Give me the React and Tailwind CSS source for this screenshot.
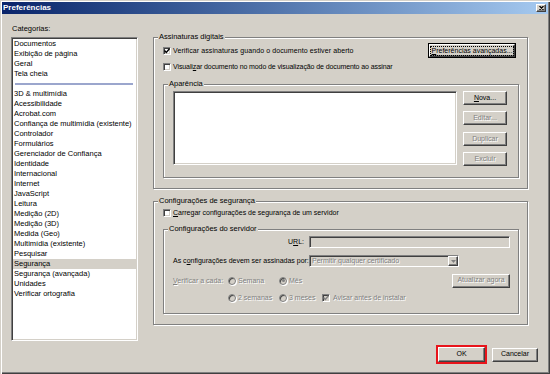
import React from 'react';

const DIS = 'text-[#808080] [text-shadow:1px_1px_0_#fff]';
const RAISED = 'border border-t-white border-l-white border-r-[#404040] border-b-[#404040] shadow-[inset_-1px_-1px_0_#808080] bg-[#d4d0c8]';
const SUNKEN = 'border border-t-[#808080] border-l-[#808080] border-r-white border-b-white shadow-[inset_1px_1px_0_#404040,inset_-1px_-1px_0_#d4d0c8]';

const CATS_TOP = ['Documentos', 'Exibição de página', 'Geral', 'Tela cheia'];
const CATS = [
  '3D & multimídia', 'Acessibilidade', 'Acrobat.com', 'Confiança de multimídia (existente)',
  'Controlador', 'Formulários', 'Gerenciador de Confiança', 'Identidade', 'Internacional',
  'Internet', 'JavaScript', 'Leitura', 'Medição (2D)', 'Medição (3D)', 'Medida (Geo)',
  'Multimídia (existente)', 'Pesquisar', 'Segurança', 'Segurança (avançada)', 'Unidades',
  'Verificar ortografia',
];

const Check = ({ checked, disabled }) => (
  <span className={`w-[8px] h-[8px] shrink-0 flex items-center justify-center ${SUNKEN} ${disabled ? 'bg-[#d4d0c8]' : 'bg-white'}`}>
    {checked && (
      <svg width="6" height="6" viewBox="0 0 6 6">
        <path d="M0.5 2.5 L2.3 4.5 L5.5 0.8" fill="none" stroke={disabled ? '#808080' : '#000'} strokeWidth="1.4" />
      </svg>
    )}
  </span>
);

const Radio = ({ checked }) => (
  <span className="w-[8px] h-[8px] shrink-0 rounded-full border border-[#808080] bg-[#d4d0c8] shadow-[1px_1px_0_#fff,inset_1px_1px_0_#404040] flex items-center justify-center">
    {checked && <span className="w-[3px] h-[3px] rounded-full bg-[#808080]" />}
  </span>
);

const Btn = ({ children, className = '', disabled }) => (
  <div className={`flex items-center justify-center ${RAISED} ${disabled ? DIS : 'text-black'} ${className}`}>
    {children}
  </div>
);

const Group = ({ label, className = '', children }) => (
  <div className={`relative border border-[#808080] shadow-[inset_1px_1px_0_#fff,1px_1px_0_#fff] ${className}`}>
    <span className="absolute top-[-6px] left-[4px] px-[1px] bg-[#d4d0c8] leading-[10px] text-[7.5px]">{label}</span>
    {children}
  </div>
);

export default function App() {
  return (
    <div className="w-[550px] h-[374px] bg-[#d4d0c8] flex flex-col overflow-hidden whitespace-nowrap text-[7px] text-black font-['Liberation_Sans',Arial,sans-serif] shadow-[inset_1px_1px_0_#d4d0c8,inset_2px_2px_0_#fff,inset_-1px_-1px_0_#404040,inset_-2px_-2px_0_#808080]">
      {/* title bar */}
      <div className="mx-[2px] mt-[2px] h-[12px] shrink-0 flex items-center justify-between bg-gradient-to-r from-[#0a246a] to-[#a6caf0]">
        <span className="pl-[1px] text-white font-bold text-[8px] leading-[12px]">Preferências</span>
        <div className={`w-[10px] h-[8px] mr-[2px] flex items-center justify-center ${RAISED}`}>
          <svg width="5" height="4" viewBox="0 0 5 4">
            <path d="M0.5 0 L4.5 4 M4.5 0 L0.5 4" stroke="#000" strokeWidth="1.2" />
          </svg>
        </div>
      </div>

      {/* body */}
      <div className="flex pt-[10px]">
        <div className="ml-[11px] w-[127px] flex flex-col text-[7.5px]">
          <div className="h-[10px] leading-[10px] pl-[1px]">Categorias:</div>
          <div className={`mt-[3px] h-[304px] bg-white ${SUNKEN} p-[1px]`}>
            {CATS_TOP.map(c => (
              <div key={c} className="h-[10px] leading-[10px] pl-[1px]">{c}</div>
            ))}
            <div className="h-[10px] flex items-center pl-[2px] pr-[3px]">
              <div className="h-[2px] w-full bg-[#9ba6cd]" />
            </div>
            {CATS.map(c => (
              <div key={c} className={`h-[10px] leading-[10px] pl-[1px] ${c === 'Segurança' ? 'bg-[#d4d0c8]' : ''}`}>{c}</div>
            ))}
          </div>
        </div>

        <div className="ml-[15px] mt-[13px] flex flex-col">
          <Group label="Assinaturas digitais" className="w-[375px] h-[152px] pl-[9px] pr-[11px] pt-[5px]">
            <div className="h-[15px] flex items-center justify-between">
              <div className="flex items-center gap-[2px]">
                <Check checked />
                <span className="leading-[10px] tracking-[0.1px]">Verificar assinaturas guando o documento estiver aberto</span>
              </div>
              <div className="w-[88px] h-[15px] border border-black">
                <Btn className="w-full h-full">
                  <span className="border border-dotted border-black px-[1px] leading-[8px]"><u>P</u>referências avançadas...</span>
                </Btn>
              </div>
            </div>
            <div className="mt-[4px] h-[10px] flex items-center gap-[2px]">
              <Check />
              <span className="leading-[10px] tracking-[-0.1px]">Visuali<u>z</u>ar documento no modo de visualização de documento ao assinar</span>
            </div>
            <Group label="Aparência" className="mt-[12px] w-[356px] h-[94px] pl-[9px] pt-[6px] flex items-start">
              <div className={`w-[284px] h-[74px] bg-white ${SUNKEN}`} />
              <div className="ml-[6px] flex flex-col">
                <Btn className="w-[44px] h-[14px]"><span><u>N</u>ova...</span></Btn>
                <Btn disabled className="w-[44px] h-[14px] mt-[6px]">Editar...</Btn>
                <Btn disabled className="w-[44px] h-[14px] mt-[7px]">Duplicar</Btn>
                <Btn disabled className="w-[44px] h-[14px] mt-[6px]">Excluir</Btn>
              </div>
            </Group>
          </Group>

          <Group label="Configurações de segurança" className="mt-[12px] w-[375px] h-[124px] pl-[9px] pt-[6px]">
            <div className="h-[10px] flex items-center gap-[2px]">
              <Check />
              <span className="leading-[10px]"><u>C</u>arregar configurações de segurança de um servidor</span>
            </div>
            <Group label="Configurações do servidor" className="mt-[11px] w-[356px] h-[85px] pl-[9px]">
              <div className="mt-[6px] flex items-center">
                <span className="w-[131px] text-right leading-[10px]">U<u>R</u>L:</span>
                <div className={`ml-[5px] w-[201px] h-[12px] bg-[#d4d0c8] ${SUNKEN}`} />
              </div>
              <div className="mt-[7px] flex items-center">
                <span className="w-[131px] text-right leading-[10px]">As c<u>o</u>nfigurações devem ser assinadas por:</span>
                <div className={`ml-[5px] w-[150px] h-[12px] bg-[#d4d0c8] ${SUNKEN} flex items-center justify-between`}>
                  <span className={`pl-[2px] leading-[10px] ${DIS}`}>Permitir qualquer certificado</span>
                  <div className={`w-[10px] h-full flex items-center justify-center ${RAISED}`}>
                    <svg width="5" height="3" viewBox="0 0 5 3">
                      <path d="M0 0 H5 L2.5 3 Z" fill="#808080" />
                    </svg>
                  </div>
                </div>
              </div>
              <div className="mt-[6px] h-[15px] w-[337px] flex items-center">
                <span className={`w-[55px] leading-[10px] ${DIS}`}><u>V</u>erificar a cada:</span>
                <div className="w-[51px] flex items-center gap-[2px]">
                  <Radio />
                  <span className={`leading-[10px] ${DIS}`}>Semana</span>
                </div>
                <div className="flex items-center gap-[2px]">
                  <Radio checked />
                  <span className={`leading-[10px] ${DIS}`}>Mês</span>
                </div>
                <Btn disabled className="ml-auto w-[58px] h-[14px]">Atualizar agora</Btn>
              </div>
              <div className="mt-[5px] h-[10px] flex items-center">
                <span className="w-[55px]" />
                <div className="w-[51px] flex items-center gap-[2px]">
                  <Radio />
                  <span className={`leading-[10px] ${DIS}`}>2 semanas</span>
                </div>
                <div className="w-[43px] flex items-center gap-[2px]">
                  <Radio />
                  <span className={`leading-[10px] ${DIS}`}>3 meses</span>
                </div>
                <div className="flex items-center gap-[3px]">
                  <Check checked disabled />
                  <span className={`leading-[10px] ${DIS}`}>Avisar antes de instalar</span>
                </div>
              </div>
            </Group>
          </Group>
        </div>
      </div>

      {/* footer buttons */}
      <div className="mt-[4px] pr-[12px] flex items-center justify-end gap-[5px]">
        <div className="w-[51px] h-[19px] border-2 border-[#e8141b]">
          <Btn className="w-full h-full">OK</Btn>
        </div>
        <Btn className="w-[46px] h-[14px]">Cancelar</Btn>
      </div>
    </div>
  );
}
